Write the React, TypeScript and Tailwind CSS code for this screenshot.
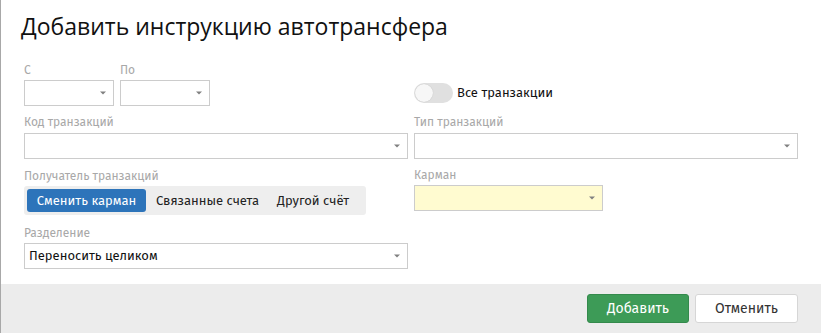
import React from "react";

function Caret() {
  return (
    <svg width="6" height="4" viewBox="0 0 6 4" className="shrink-0">
      <path d="M0 0.5 L6 0.5 L3 3.5 Z" fill="#808080" />
    </svg>
  );
}

function Select({ className = "", children, bg = "bg-white" }: { className?: string; children?: React.ReactNode; bg?: string }) {
  return (
    <div className={`flex items-center justify-between border border-[#cccccc] ${bg} pl-[4px] pr-[7px] ${className}`}>
      <span className="text-[13px] text-[#111]">{children}</span>
      <Caret />
    </div>
  );
}

function Label({ children, className = "" }: { children: React.ReactNode; className?: string }) {
  return <div className={`text-[12px] leading-[14px] text-[#a8a8a8] ${className}`}>{children}</div>;
}

export default function App() {
  return (
    <div
      className="flex h-[333px] w-[821px] flex-col border-l border-[#a8a8a8] bg-white"
      style={{ fontFamily: '"Fira Sans", "Noto Sans", "Open Sans", sans-serif' }}
    >
      <div className="flex-1 px-[20px]">
        <h1
          className="mt-[11px] text-[23px] font-medium leading-[30px] text-[#111]"
          style={{ fontFamily: '"Open Sans", sans-serif' }}
        >
          Добавить инструкцию автотрансфера
        </h1>

        <div className="mt-[22px] grid grid-cols-[384px_384px] gap-x-[6px] pl-[3px]">
          <div className="flex gap-[6px]">
            <div>
              <Label className="h-[17px]">С</Label>
              <Select className="h-[26px] w-[90px]" />
            </div>
            <div>
              <Label className="h-[17px]">По</Label>
              <Select className="h-[26px] w-[90px]" />
            </div>
          </div>
          <div className="flex items-center gap-[4px] pt-[17px]">
            <div className="relative h-[20px] w-[39px] rounded-full bg-[#e0e0e0]">
              <div className="absolute left-[1px] top-[1px] h-[18px] w-[18px] rounded-full bg-[#f7f7f7] shadow-[0_0_1px_rgba(0,0,0,0.2)]" />
            </div>
            <span className="text-[13px] text-[#111]">Все транзакции</span>
          </div>

          <div className="mt-[9px]">
            <Label className="h-[18px]">Код транзакций</Label>
            <Select className="h-[26px] w-[384px]" />
          </div>
          <div className="mt-[9px]">
            <Label className="h-[18px]">Тип транзакций</Label>
            <Select className="h-[26px] w-[384px]" />
          </div>

          <div className="mt-[10px]">
            <Label className="h-[17px]">Получатель транзакций</Label>
            <div className="flex h-[29px] w-[342px] items-center gap-[2px] rounded-[3px] bg-[#eeeeee] px-[3px]">
              <div className="flex h-[23px] w-[119px] items-center justify-center rounded-[3px] bg-[#2d74ba] text-[13px] text-white">
                Сменить карман
              </div>
              <div className="flex h-[23px] items-center px-[8px] text-[13px] text-[#222]">Связанные счета</div>
              <div className="flex h-[23px] items-center px-[8px] text-[13px] text-[#222]">Другой счёт</div>
            </div>
          </div>
          <div className="mt-[9px]">
            <Label className="h-[17px]">Карман</Label>
            <Select className="h-[26px] w-[189px]" bg="bg-[#fffbd0]" />
          </div>

          <div className="mt-[11px]">
            <Label className="h-[17px]">Разделение</Label>
            <Select className="h-[26px] w-[384px]">Переносить целиком</Select>
          </div>
        </div>
      </div>

      <div className="flex h-[49px] items-center justify-end gap-[6px] bg-[#ececec] pr-[23px]">
        <button className="h-[29px] w-[102px] rounded-[3px] border border-[#348a4c] bg-[#3d9b57] text-[14px] text-white">
          Добавить
        </button>
        <button className="h-[29px] w-[103px] rounded-[3px] border border-[#d6d6d6] bg-white text-[14px] text-[#333]">
          Отменить
        </button>
      </div>
    </div>
  );
}
